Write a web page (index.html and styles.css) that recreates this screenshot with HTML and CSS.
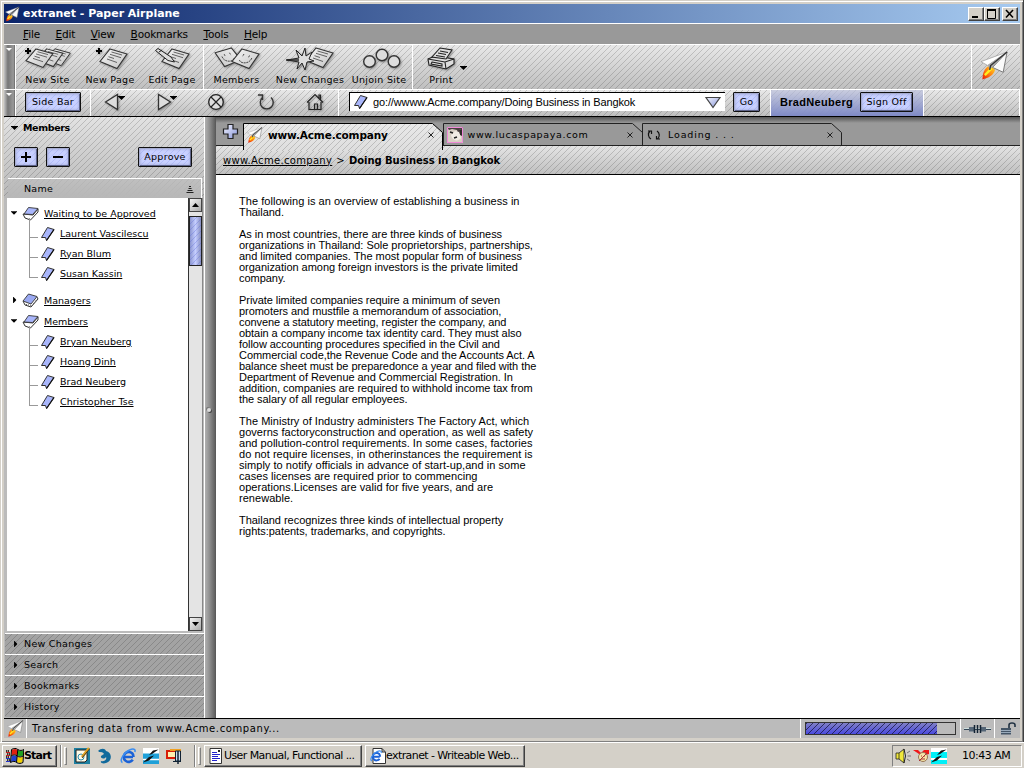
FILE: index.html
```
<!DOCTYPE html>
<html lang="en">
<head>
<meta charset="utf-8">
<title>extranet - Paper Airplane</title>
<link rel="stylesheet" href="styles.css">
</head>
<body>
<svg class="defs" width="0" height="0">
  <defs>
    <linearGradient id="flame" x1="0" y1="1" x2="1" y2="0"><stop offset="0" stop-color="#e81808"/><stop offset=".45" stop-color="#ff7a10"/><stop offset="1" stop-color="#ffe020"/></linearGradient>
    <linearGradient id="paper" x1="0" y1="0" x2="1" y2="1"><stop offset="0" stop-color="#f6f6f6"/><stop offset="1" stop-color="#c4c4c4"/></linearGradient>
    <linearGradient id="lav" x1="0" y1="0" x2="1" y2="1"><stop offset="0" stop-color="#f4f6ff"/><stop offset="1" stop-color="#8794d8"/></linearGradient>
    <symbol id="plane" viewBox="0 0 30 30">
      <path d="M8 16C3 20 3 25 2.500 29.500C9 28 14 25 15.500 20L12 15Z" fill="url(#flame)"/>
      <path d="M5 25L12 18" stroke="#ffee20" stroke-width="2.500"/>
      <path d="M28 1L1 11L8 15Z" fill="#fff" stroke="#999" stroke-width=".7"/>
      <path d="M28 1L13 17L24 22Z" fill="#fafafa" stroke="#777" stroke-width="1"/>
      <path d="M28 1L8 14.500L10 19L13 16.500Z" fill="#aaa"/>
      <path d="M28 1L11 15L10 19.500" fill="none" stroke="#333" stroke-width="1.400"/>
    </symbol>
    <symbol id="mark" viewBox="0 0 16 16">
      <path d="M7.500 1.500L14 3.500L6.500 14.500L5.500 11.500L1.500 11.500Z" fill="#a9b6fb" stroke="#333"/>
      <path d="M14 3.500L6.500 14.500" stroke="#111" stroke-width="1.300"/>
    </symbol>
    <symbol id="book" viewBox="0 0 17 15">
      <path d="M1 8L3 12L8.500 14L16 6V3L11 9Z" fill="#fff" stroke="#333"/>
      <path d="M6.500 1.500L16 2.500L10.500 8.500L2 8Z" fill="#a9b6fb" stroke="#333" stroke-width=".9"/>
    </symbol>
    <symbol id="bookshut" viewBox="0 0 17 15">
      <path d="M1 8L3 12L9 14L16 6L15 4" fill="#fff" stroke="#333"/>
      <path d="M6.500 1L15 3.500L9 11L1 8Z" fill="#9aa9f2" stroke="#333" stroke-width=".9"/>
      <path d="M4 11.500L10 12.500L16 5" fill="none" stroke="#555" stroke-dasharray="1 1"/>
    </symbol>
    <symbol id="sheet" viewBox="0 0 29 22">
      <path d="M11 1L28 6L18 20.500L1 13.500Z" fill="url(#paper)" stroke="#333" stroke-width="1.100"/>
      <path d="M12.500 4L23 7M11 6.300L22 9.700M9.500 8.700L15 10.500M8 11L18 14.500" stroke="#555" stroke-width=".9"/>
    </symbol>
    <symbol id="face" viewBox="0 0 29 22">
      <path d="M11 1L28 6L18 20.500L1 13.500Z" fill="url(#paper)" stroke="#333" stroke-width="1.100"/>
      <path d="M13 6L11.500 8.500M18.500 7.500L17.500 9.500M8.500 12C9 16 19 16.500 21 9.500" fill="none" stroke="#444" stroke-dasharray="2 .7"/>
    </symbol>
    <symbol id="flag" viewBox="0 0 18 16">
      <path d="M6 2C8 .5 10 .5 11.500 2L11 7.500C9.500 6 7.500 6 5.500 7.500Z" fill="#e02010"/><path d="M12 2C14 3.500 16 3 17.500 2L17 7.500C15 9 13.500 8.500 11.500 7.500Z" fill="#20a020"/><path d="M5.500 8.500C7.500 7 9.500 7 11 8.500L10.500 14C8.500 12.500 7 13 5 14Z" fill="#2040d0"/><path d="M11.500 8.500C13.500 10 15 9.500 17 8.500L16.500 14C14.500 15.500 13 15 11 14Z" fill="#f0d000"/>
      <path d="M5.500 1.500C8 0 10 0 11.800 1.500C14 3 16 2.500 18 1.500M5 8C7.500 6.500 9.500 6.500 11.200 8C13.500 9.500 15 9 17.200 8M4.500 14.500C7 13 9 13 10.500 14.500C13 16 15 15.500 17 14.500M5.500 1.500L4.500 14.500M11.800 1.500L10.500 14.500M17.800 1.500L17 14.500" fill="none" stroke="#000"/>
      <path d="M0 3H3M1 6H4M0 9H3.500M1 12H4" stroke="#000" stroke-width="1.500" stroke-dasharray="1.200 .6"/><path d="M0 4.500H4M0 7.500H4" stroke="#c22"/><path d="M0 10.500H4M0 13.500H4" stroke="#23c"/>
    </symbol>
    <symbol id="ie" viewBox="0 0 16 16">
      <path d="M13 9H4.500M12.800 6A5 5 0 1 0 12.800 11.800M13.500 9A5 5 0 0 0 12 5" fill="none" stroke="#1c62d6" stroke-width="2.600"/>
      <path d="M2.500 14.500C-1 13.500 3 5 9.500 2C13 .5 16 .8 14.800 4" fill="none" stroke="#3a8cf0" stroke-width="1.500"/>
    </symbol>
    <symbol id="swoosh" viewBox="0 0 16 16">
      <path d="M0 0H16V16H0Z" fill="#fff"/><path d="M0 5.500H16V16H0Z" fill="#1fa0d8"/>
      <path d="M0 11.500H16" stroke="#fff" stroke-width="1.500"/>
      <path d="M15.500 1.500L10 2.500L6 7L9 6ZM11 7.500L6 9L0 14.500L6 12.500Z" fill="#111"/>
    </symbol>
    <symbol id="down" viewBox="0 0 7 4"><path d="M0 0H7V.6L3.500 4L0 .6Z" fill="#000"/></symbol>
    <symbol id="right" viewBox="0 0 4 7"><path d="M0 0H.6L4 3.500L.6 7H0Z" fill="#000"/></symbol>
    <symbol id="close" viewBox="0 0 6 6"><path d="M.5 .5L5.500 5.500M5.500 .5L.5 5.500" stroke="#111" stroke-width=".9"/></symbol>
    <symbol id="reload" viewBox="0 0 18 18"><path d="M5.500 4.500A6.500 6.500 0 1 0 14 4.500M1 2H5.500V7" fill="none" stroke="#333" stroke-width="1.400"/></symbol>
  </defs>
</svg>

<div class="window">
  <header class="titlebar">
    <svg class="i-title"><use href="#plane"/></svg>
    <h1 class="title">extranet - Paper Airplane</h1>
    <div class="winbtns">
      <span class="winbtn"><svg width="12" height="10"><path d="M2 8H8" stroke="#000" stroke-width="2"/></svg></span>
      <span class="winbtn"><svg width="12" height="10"><path d="M1.500 1.500H9.500V9.500H1.500Z" fill="none" stroke="#000"/><path d="M1 1H10" stroke="#000" stroke-width="2"/></svg></span>
      <span class="winbtn last"><svg width="12" height="10"><path d="M2 1L9 8.500M9 1L2 8.500" stroke="#000" stroke-width="1.600"/></svg></span>
    </div>
  </header>

  <nav class="menu">
    <span><u>F</u>ile</span><span><u>E</u>dit</span><span><u>V</u>iew</span><span><u>B</u>ookmarks</span><span><u>T</u>ools</span><span><u>H</u>elp</span>
  </nav>

  <div class="bar tools">
    <span class="grip"></span>
    <div class="group">
      <div class="tool w60"><svg width="50" height="24"><g transform="scale(1 .95)"><use href="#sheet" x="21" y="1" width="28" height="20"/><use href="#sheet" x="13" y="1" width="28" height="21"/><use href="#sheet" x="2" y="1" width="29" height="22"/></g><path d="M2 4H8M5 1V7" stroke="#000" stroke-width="2"/></svg><span>New Site</span></div>
      <div class="tool w64"><svg width="36" height="24"><use href="#sheet" x="7" y="1" width="29" height="22"/><path d="M4 4H10M7 1V7" stroke="#000" stroke-width="2"/></svg><span>New Page</span></div>
      <div class="tool w62"><svg width="36" height="24"><use href="#sheet" x="7" y="1" width="29" height="22"/><path d="M1.500 3.500L4 1.500L17 10L20.500 15L14 13.500Z" fill="#ddd" stroke="#222"/><path d="M5 5L8 3" stroke="#222"/></svg><span>Edit Page</span></div>
    </div>
    <div class="group">
      <div class="tool w66"><svg width="48" height="24"><g transform="matrix(-1 0 0 1 29 0)"><use href="#face" y="0" width="28" height="21"/></g><use href="#face" x="18" y="1" width="29" height="22"/></svg><span>Members</span></div>
      <div class="tool w80"><svg width="48" height="24"><use href="#sheet" x="19" y="0" width="29" height="22"/><path d="M1 13L13 11L10 3L16 9L19 1L20 9L26 5L23 12L28 14L21 15L19 23L16 16L11 22L13 15Z" fill="#ddd" stroke="#222"/><path d="M0 13H13" stroke="#222" stroke-width="1.500"/></svg><span>New Changes</span></div>
      <div class="tool w58"><svg width="40" height="24"><g fill="#ddd" stroke="#333" stroke-width="1.400"><circle cx="7.500" cy="14.500" r="5.800"/><circle cx="20" cy="8" r="5.800"/><circle cx="32" cy="14.500" r="5.800"/></g></svg><span>Unjoin Site</span></div>
    </div>
    <div class="group grow">
      <div class="tool w56"><svg width="28" height="24"><g stroke="#222" stroke-width="1.100" fill="#ddd"><path d="M1 12L8 9L27 12V17L19 22L2 18Z"/><path d="M5 10L13 1L25 3L19 12Z"/><path d="M1 12L18 15L27 12M18 15L19 22M5 15L15 17V19L4 17ZM13 4L21 5.500M11 6L19 7.500M9 8.500L18 10" fill="none"/></g></svg><span>Print</span></div>
      <svg class="drop print-drop"><use href="#down"/></svg>
    </div>
    <div class="group logo"><svg width="29" height="31"><use href="#plane"/></svg></div>
  </div>

  <div class="bar nav">
    <span class="grip"></span>
    <div class="group g-side"><button class="btn b-side">Side Bar</button></div>
    <div class="group g-nav">
      <span class="pair"><svg width="16" height="18"><path d="M1.500 9L13.500 1.500V16.500Z" fill="#ddd" stroke="#333" stroke-width="1.300"/></svg><svg class="drop"><use href="#down"/></svg></span>
      <span class="pair"><svg width="16" height="18"><path d="M14.500 9L2.500 1.500V16.500Z" fill="#ddd" stroke="#333" stroke-width="1.300"/></svg><svg class="drop"><use href="#down"/></svg></span>
      <svg class="stop" width="18" height="18"><circle cx="9" cy="9" r="7.300" fill="#ddd" stroke="#222" stroke-width="1.300"/><path d="M4 4L14 14M14 4L4 14" stroke="#222" stroke-width="1.200"/></svg>
      <svg class="rel" width="18" height="18"><use href="#reload"/></svg>
      <svg class="home" width="18" height="18"><path d="M3 9V16.500H15V9M1 9.500L9 1.500L17 9.500M13 5V2H14.500V7M8.500 16V11H11.500V16" fill="none" stroke="#222" stroke-width="1.200"/></svg>
    </div>
    <div class="group g-url">
      <div class="url"><svg width="16" height="16"><use href="#mark"/></svg><span>go://wwww.Acme.company/Doing Business in Bangkok</span><svg width="16" height="13"><path d="M1 1.500H15L8 11.500Z" fill="url(#lav)" stroke="#444" stroke-width="1.200"/></svg></div>
      <button class="btn b-go">Go</button>
    </div>
    <div class="group user"><b>BradNeuberg</b><button class="btn b-sign">Sign Off</button></div>
    <div class="group grow"></div>
  </div>

  <div class="body">
    <aside class="side">
      <section class="panel">
        <h2><svg class="drop"><use href="#down"/></svg>Members</h2>
        <div class="actions">
          <button class="btn sq"><svg width="12" height="12"><path d="M1 6H11M6 1V11" stroke="#000" stroke-width="2"/></svg></button>
          <button class="btn sq"><svg width="12" height="12"><path d="M1 6H11" stroke="#000" stroke-width="2"/></svg></button>
          <button class="btn b-app">Approve</button>
        </div>
        <div class="thead"><span>Name</span><svg width="8" height="8"><path d="M3 1.500H5M2.500 3.500H5.500M1.500 5.500H6.500M.5 7.500H7.500" stroke="#111" stroke-width=".9"/></svg></div>
      </section>
      <div class="listwrap">
        <div class="list">
          <div class="row"><svg class="tw"><use href="#down"/></svg><svg class="bk"><use href="#book"/></svg><a>Waiting to be Approved</a></div>
          <div class="kids">
            <div class="kid"><i></i><svg><use href="#mark"/></svg><a>Laurent Vascilescu</a></div>
            <div class="kid"><i></i><svg><use href="#mark"/></svg><a>Ryan Blum</a></div>
            <div class="kid"><i></i><svg><use href="#mark"/></svg><a>Susan Kassin</a></div>
          </div>
          <div class="row mgr"><svg class="tw shut"><use href="#right"/></svg><svg class="bk"><use href="#bookshut"/></svg><a>Managers</a></div>
          <div class="row mem"><svg class="tw"><use href="#down"/></svg><svg class="bk"><use href="#book"/></svg><a>Members</a></div>
          <div class="kids">
            <div class="kid"><i></i><svg><use href="#mark"/></svg><a>Bryan Neuberg</a></div>
            <div class="kid"><i></i><svg><use href="#mark"/></svg><a>Hoang Dinh</a></div>
            <div class="kid"><i></i><svg><use href="#mark"/></svg><a>Brad Neuberg</a></div>
            <div class="kid"><i></i><svg><use href="#mark"/></svg><a>Christopher Tse</a></div>
          </div>
        </div>
        <div class="scroll">
          <span class="sbtn"><svg width="7" height="4"><path d="M3.500 0L7 4H0Z"/></svg></span>
          <span class="thumb"></span>
          <span class="sbtn end"><svg width="7" height="4"><path d="M3.500 4L7 0H0Z"/></svg></span>
        </div>
      </div>
      <div class="acc"><svg><use href="#right"/></svg><span>New Changes</span></div>
      <div class="acc"><svg><use href="#right"/></svg><span>Search</span></div>
      <div class="acc"><svg><use href="#right"/></svg><span>Bookmarks</span></div>
      <div class="acc"><svg><use href="#right"/></svg><span>History</span></div>
    </aside>
    <div class="splitter"><i></i></div>
    <main class="main">
      <div class="tabs">
        <span class="add"><svg width="17" height="17"><path d="M6 1.500H11V6H15.500V11H11V15.500H6V11H1.500V6H6Z" fill="url(#lav)" stroke="#222" stroke-width="1.200"/></svg></span>
        <div class="tab on"><div class="fill"></div><svg class="edge" width="200" height="27"><path d="M.5 27V.5H189.500L199.500 9.500V27" fill="none" stroke="#000"/></svg><svg class="fav" width="16" height="16"><use href="#plane"/></svg><b>www.Acme.company</b><svg class="x"><use href="#close"/></svg></div>
        <div class="tab"><svg class="edge" width="200" height="22"><path d="M.5 22V.5H189.500L199.500 9.500V22" fill="none" stroke="#222"/></svg><svg class="fav" width="16" height="16"><path d="M0 0H16V16H0Z" fill="#d8cfc4"/><path d="M0 0H16V2L12 3L13 7L11 6L10 3L5 2L2 3Z" fill="#4a4040"/><path d="M12 3L15 2V9L13 8Z" fill="#302828"/><path d="M4 8C5 14 11 15 14 11L12 5L8 4Z" fill="#f2ece4"/><path d="M3 5L6 6M7 11L10 10" stroke="#222" stroke-width="1.500"/><path d="M.5 .5H15.500V15.500H.5Z" fill="none" stroke="#f08ad8"/></svg><span class="luc">www.lucaspapaya.com</span><svg class="x"><use href="#close"/></svg></div>
        <div class="tab"><svg class="edge" width="200" height="22"><path d="M.5 22V.5H189.500L199.500 9.500V22" fill="none" stroke="#222"/></svg><svg class="fav" width="16" height="16"><path d="M5 12A5 5 0 0 1 4 4M11 4A5 5 0 0 1 11.500 12M2 4H5.500V7M14 12H10.500V9" fill="none" stroke="#111" stroke-width="1.200"/></svg><span class="load">Loading . . .</span><svg class="x"><use href="#close"/></svg></div>
      </div>
      <div class="crumb"><a>www.Acme.company</a><span>&gt;</span><b>Doing Business in Bangkok</b></div>
      <article class="doc">
        <p><span class="first">The following is an overview of establishing a business in</span><br>Thailand.</p>
        <p>As in most countries, there are three kinds of business<br>organizations in Thailand: Sole proprietorships, partnerships,<br>and limited companies. The most popular form of business<br>organization among foreign investors is the private limited<br>company.</p>
        <p class="tight">Private limited companies require a minimum of seven<br>promoters and mustfile a memorandum of association,<br>convene a statutory meeting, register the company, and<br>obtain a company income tax identity card. They must also<br>follow accounting procedures specified in the Civil and<br>Commercial code,the Revenue Code and the Accounts Act. A<br>balance sheet must be preparedonce a year and filed with the<br>Department of Revenue and Commercial Registration. In<br>addition, companies are required to withhold income tax from<br>the salary of all regular employees.</p>
        <p class="loose">The Ministry of Industry administers The Factory Act, which<br>governs factoryconstruction and operation, as well as safety<br>and pollution-control requirements. In some cases, factories<br>do not require licenses, in otherinstances the requirement is<br>simply to notify officials in advance of start-up,and in some<br>cases licenses are required prior to commencing<br>operations.Licenses are valid for five years, and are<br>renewable.</p>
        <p>Thailand recognizes three kinds of intellectual property<br>rights:patents, trademarks, and copyrights.</p>
      </article>
    </main>
  </div>

  <footer class="status">
    <span class="s-ico"><svg width="17" height="17"><use href="#plane"/></svg></span>
    <span class="s-text">Transfering data from www.Acme.company...</span>
    <span class="s-prog"><span class="prog"><i></i></span></span>
    <span class="s-plug"><svg width="27" height="10"><path d="M0 5H27" stroke="#345" stroke-width="2"/><path d="M0 4.500H27" stroke="#cdd"/><path d="M5 3H10V7.500H5ZM17 3H22V7.500H17Z" fill="#567"/><path d="M10.500 1V9M13.500 1V9M16.500 1V9" stroke="#123" stroke-width="1.500"/></svg></span>
    <span class="s-lock"><svg width="17" height="13"><path d="M1 6H11V12.500H1Z" fill="#456"/><path d="M1 8.500H11M1 10.500H11" stroke="#9ab"/><path d="M9 6V3Q9 1 12 1Q15 1 15 3V5" fill="none" stroke="#234" stroke-width="1.600"/></svg></span>
  </footer>
</div>

<div class="taskbar">
  <div class="start"><svg width="18" height="16"><use href="#flag"/></svg><b>Start</b></div>
  <span class="sep"></span><span class="hand"></span>
  <div class="quick">
    <svg width="16" height="16"><path d="M0 0H16V16H0Z" fill="#1d7fa0"/><path d="M2 2H13V12L11 14H2Z" fill="#fffbe8" stroke="#222"/><circle cx="7" cy="9" r="3" fill="none" stroke="#2a8ab0"/><path d="M15 0L8 9" stroke="#e0a020" stroke-width="2.500"/><path d="M15.500 1L8 10" stroke="#222" stroke-width=".8"/></svg>
    <svg width="16" height="16"><path d="M1 3C4 0 8 0 9 3C15 4 16 13 9 15C6 16 3 15 4 13C8 14 10 11 9 9C7 12 3 10 4 8L7 6C5 3 3 5 1 3Z" fill="#126a9c"/></svg>
    <svg width="16" height="16"><use href="#ie"/></svg>
    <svg width="16" height="16"><use href="#swoosh"/></svg>
    <svg width="16" height="16"><path d="M0 2H12V11H0Z" fill="#d81c08"/><path d="M2 4H10V9H2Z" fill="#fff0b0"/><path d="M4 1H15V3H4Z" fill="#f0a020"/><path d="M9.500 3H14.500V13H9.500ZM7 13.500H15" fill="#cde" stroke="#123"/><path d="M12 3V16" stroke="#123" stroke-width="1.500"/></svg>
  </div>
  <span class="sep"></span><span class="hand"></span>
  <div class="task t1"><svg width="14" height="16"><path d="M1 .5H12.500V15.500H1Z" fill="#fff" stroke="#333"/><path d="M3 4.500H8M3 6.500H11M3 8.500H9M3 10.500H11M3 12.500H8" stroke="#22c"/><path d="M9 2H11V4H9Z" fill="#222"/></svg><span>User Manual, Functional ...</span></div>
  <div class="task t2"><svg width="16" height="16"><path d="M3 .5H12L15.500 4V15.500H3ZM12 .5V4H15" fill="#fff" stroke="#333"/><use href="#ie" y="2" width="12" height="12"/></svg><span>extranet - Writeable Web...</span></div>
  <div class="tray">
    <svg width="17" height="16"><path d="M1 5H4L9 1V15L4 11H1Z" fill="#f0e83a" stroke="#222" stroke-width=".8"/><path d="M4 5V11" stroke="#222" stroke-width=".8"/><path d="M9 1Q12 8 9 15" fill="#ccc" stroke="#222"/><path d="M12 5L15 3M12.500 8H16M12 11L15 13" stroke="#777"/></svg>
    <svg width="17" height="16"><path d="M0 2H5L8 5L11 2H16V6L9 8Z" fill="#f01818"/><circle cx="10" cy="9" r="4.500" fill="#f6e6a8" stroke="#975"/><path d="M8 8H9M11 8H12M8 11H12M6 13L14 5" stroke="#a33"/></svg>
    <svg width="16" height="16"><path d="M0 0H16V16H0Z" fill="#00f0f8"/><path d="M0 0H16V4H0ZM0 10H16V12H0Z" fill="#fff"/><path d="M15.500 1.500L10 2.500L6 7L9 6ZM11 7.500L6 9L0 14.500L6 12.500Z" fill="#111"/></svg>
    <span>10:43 AM</span>
  </div>
</div>
</body>
</html>
```
FILE: styles.css
```
* { box-sizing: border-box; }
:root {
  --stripe: repeating-linear-gradient(135deg, rgba(0,0,0,.16) 0, rgba(0,0,0,.16) .9px, transparent 1.1px, transparent 4.243px);
}
body { margin: 0; width: 1024px; height: 768px; overflow: hidden; background: #d4d0c8; color: #000; font-family: "DejaVu Sans", sans-serif; font-size: 9.500px; line-height: 12px; white-space: nowrap; }
svg { display: block; flex: none; overflow: visible; }
.defs { position: absolute; }
h1, h2, p { margin: 0; font-size: inherit; }
a { text-decoration: underline; }
button { font: inherit; padding: 0; }

.window { height: 742px; display: flex; flex-direction: column; padding: 4px 3px 4px 4px; border-right: 1px solid #404040; box-shadow: inset 1px 1px #d4d0c8, inset 2px 2px #fff, inset -1px -1px #808080; }
.titlebar { height: 19px; display: flex; align-items: center; background: linear-gradient(90deg, #0a246a, #a6caf0); color: #fff; padding: 0 2px 0 1px; }
.i-title { width: 15px; height: 16px; }
.title { font: bold 11px/14px "DejaVu Sans", sans-serif; margin-left: 3px; letter-spacing: -.02px; flex: 1; }
.winbtns { display: flex; }
.winbtn { width: 16px; height: 14px; background: #d4d0c8; border: 1px solid; border-color: #fff #404040 #404040 #fff; box-shadow: inset -1px -1px #808080; padding: 1px; }
.winbtn.last { margin-left: 2px; }
.menu { height: 21px; border-top: 1px solid #fff; background: #999; display: flex; align-items: center; padding-left: 19px; gap: 15.500px; font-size: 10.500px; letter-spacing: -.15px; }

.bar { display: flex; border-top: 1px solid #fff; background: var(--stripe), linear-gradient(#e8e8e8, #bfbfbf); flex: none; }
.tools { height: 45px; }
.nav { height: 27px; }
.grip { width: 12px; background: linear-gradient(90deg, #c4c4c4, #777 35%, #999 85%, #666); border-right: 1px solid #fff; flex: none; }
.grip::before { content: ""; display: block; margin: 3px 0 0 2px; width: 0; border: 3px solid transparent; border-top-color: #fff; border-bottom: 0; }
.group { display: flex; border-right: 1px solid #fff; flex: none; }
.grow { flex: 1; }
.tool { display: flex; flex-direction: column; align-items: center; padding-top: 2px; letter-spacing: .3px; }
.tool span { margin-top: 3px; }
.tool svg, .g-nav svg { filter: drop-shadow(1px 1px 1px rgba(0,0,0,.35)); }
.w60 { width: 63px; } .w64 { width: 62px; } .w62 { width: 62px; } .w66 { width: 65px; } .w80 { width: 82px; } .w58 { width: 61px; } .w56 { width: 56px; }
.w58 span { margin-left: -5px; }
.drop { width: 7px; height: 4px; }
.print-drop { margin: 21px 0 0 -9px; }
.logo { width: 48px; padding: 5px 0 0 8px; border-right: 0; }
.btn { height: 20px; color: #000; border: 1px solid #111; box-shadow: inset 1px 1px #a6acd0, inset -1px -1px #5d6388, inset 0 0 3px 1px rgba(140,148,190,.7); border-radius: 1px; background: repeating-linear-gradient(135deg, rgba(110,125,225,.22) 0, rgba(110,125,225,.22) 1px, transparent 1px, transparent 4.243px), #c8d0ff; display: flex; align-items: center; justify-content: center; flex: none; letter-spacing: .28px; }
.g-side { width: 75px; padding: 2px 0 0 9px; }
.b-side { width: 56px; }
.g-nav { width: 248px; padding: 3px 0 0 13px; }
.pair { display: flex; width: 52px; }
.pair .drop { margin: 3px 0 0 -2px; filter: none; }
.g-nav .stop { margin-left: -1px; } .g-nav .rel { margin-left: 32px; } .g-nav .home { margin-left: 31px; }
.g-url { width: 432px; padding: 2px 0 0 10px; }
.url { width: 376px; height: 19px; background: #fff; border: solid #000; border-width: 1px 0 0 1px; display: flex; align-items: center; padding: 0 4px 0 3px; }
.url span { font: 11px/14px "Liberation Sans", sans-serif; margin-left: 4px; flex: 1; letter-spacing: -.13px; }
.b-go { width: 27px; margin-left: 8px; }
.user { width: 153px; background: linear-gradient(rgba(200,206,235,.6), #7f8ac6), var(--stripe), #ccc; padding: 2px 0 0 9px; }
.user b { font: bold 11px/20px "Liberation Sans", sans-serif; width: 80px; letter-spacing: .3px; }
.b-sign { width: 53px; }

.body { flex: 1; min-height: 0; display: flex; border-top: 1px solid #000; border-bottom: 1px solid #000; }
.side { width: 201px; background: #bbb; display: flex; flex-direction: column; border-right: 1px solid #fff; }
.panel { height: 81px; background: var(--stripe), linear-gradient(#e2e2e2, #b8b8b8); padding-top: 5px; flex: none; }
.panel h2 { height: 12px; display: flex; align-items: center; padding-left: 7px; gap: 5px; letter-spacing: -.35px; }
.actions { display: flex; margin-top: 13px; padding: 0 12px 0 10px; gap: 8px; }
.sq { width: 24px; }
.b-app { width: 54px; margin-left: auto; }
.thead { margin: 11px 2px 0 4px; height: 20px; border-top: 1px solid #fff; border-right: 1px solid #fff; display: flex; align-items: center; justify-content: space-between; padding: 0 7px 0 16px; background: linear-gradient(rgba(190,190,190,.7), #b8b8b8); letter-spacing: .25px; }
.listwrap { height: 433px; display: flex; padding-left: 3px; flex: none; }
.list { width: 182px; background: #fff; border-right: 1px solid #333; padding-top: 5px; }
.row { height: 20px; display: flex; align-items: center; padding-left: 4px; }
.row a, .kid a { padding-top: 1px; }
.row .tw { width: 6px; height: 4px; margin-right: 5px; }
.row .tw.shut { width: 3.500px; height: 6px; margin: 0 6px 0 1.500px; }
.row .bk { width: 17px; height: 15px; margin-right: 5px; }
.mgr { margin-top: 7px; } .mem { margin-top: 1px; }
.kids { margin-left: 22px; }
.kid { height: 20px; display: flex; align-items: center; }
.kid i { width: 9px; height: 20px; border: solid #999; border-width: 0 0 1px 1px; margin-top: -11px; }
.kid svg { width: 16px; height: 16px; margin: 1px 4px 0 2px; }
.scroll { width: 14px; background: #e4e4e4; display: flex; flex-direction: column; border-right: 1px solid #888; }
.sbtn { height: 14px; background: linear-gradient(135deg, #f4f4f4, #aaa); border: 1px solid #444; display: flex; align-items: center; justify-content: center; }
.thumb { margin-top: 4px; height: 50px; border: 1px solid #222; background: repeating-linear-gradient(135deg, rgba(90,105,215,.35) 0, rgba(90,105,215,.35) 1px, transparent 1px, transparent 4.243px), linear-gradient(90deg, #8c96d0, #c5ceff 50%, #8890c0); }
.sbtn.end { margin-top: auto; }
.acc { height: 21px; border-top: 1px solid #fff; background: var(--stripe), #a3a3a3; display: flex; align-items: center; padding-left: 9px; letter-spacing: .28px; flex: none; margin-left: 1px; }
.acc svg { width: 3.500px; height: 6px; margin-right: 6.500px; }
.listwrap + .acc { margin-top: 2px; }
.splitter { width: 11px; background: linear-gradient(90deg, #b0b0b0, #999 30%, #666 85%, #555); display: flex; align-items: center; }
.splitter i { width: 4px; height: 4px; margin: -16px 0 0 2px; border-radius: 3px; background: #ddd; box-shadow: 1px 1px #444, -1px -1px #777; }

.main { flex: 1; background: #fff; display: flex; flex-direction: column; }
.tabs { height: 29px; background: linear-gradient(#555, #999 6px); border-bottom: 1px solid #222; display: flex; align-items: flex-end; flex: none; }
.add { width: 27px; padding: 0 0 5px 6px; }
.tab { width: 199.500px; height: 21px; position: relative; display: flex; align-items: center; padding: 0 9px 0 4px; flex: none; }
.tab > * { position: relative; }
.tab .edge { position: absolute; left: 0; top: -1px; }
.tab .fill { position: absolute; left: 0; top: -1px; width: 200px; height: 28px; clip-path: polygon(0 0, 189px 0, 200px 10px, 200px 100%, 0 100%); background: var(--stripe), linear-gradient(#e9e9e9, #dedede); }
.on { z-index: 1; }
.tab b { font-size: 10.500px; letter-spacing: -.15px; }
.luc { letter-spacing: .65px; }
.load { letter-spacing: .85px; margin-left: 1px; }
.fav { margin-right: 5px; }
.x { width: 6px; height: 6px; margin-left: auto; }
.crumb { height: 29px; border-bottom: 1px solid #000; background: var(--stripe), linear-gradient(#e4e4e4, #c0c0c0); display: flex; align-items: center; padding: 1px 0 0 7px; flex: none; font-size: 10px; letter-spacing: .32px; }
.crumb span { margin: 0 4px; }
.crumb b { letter-spacing: -.05px; }
.doc { padding: 21px 0 0 23px; font: 11px/11px "Liberation Sans", sans-serif; letter-spacing: -.03px; }
.doc p { margin-bottom: 11px; }
.first { letter-spacing: .04px; }
.tight { letter-spacing: -.06px; }
.loose { letter-spacing: .04px; }

.status { height: 19px; background: #bbb; display: flex; flex: none; }
.status > span { border-right: 1px solid #fff; display: flex; align-items: center; }
.s-ico { width: 23px; padding-left: 3px; }
.s-text { flex: 1; padding-left: 5px; font-size: 10px; letter-spacing: .6px; }
.s-prog { width: 160px; padding-left: 4px; }
.prog { width: 151px; height: 13px; border: 1px solid #333; display: block; }
.prog i { display: block; width: 131px; height: 11px; background: repeating-linear-gradient(135deg, rgba(20,20,60,.75) 0, rgba(20,20,60,.75) .8px, transparent 1px, transparent 4.243px), linear-gradient(#8080c4, #4a4ae0); }
.s-plug { width: 34px; padding-left: 3px; }
.status > .s-lock { padding: 0 3px 0 5px; border: 0; }

.taskbar { height: 26px; border-top: 1px solid #fff; display: flex; align-items: center; padding-left: 2px; font-size: 11px; letter-spacing: -.35px; }
.start, .task { height: 22px; border: 1px solid; border-color: #fff #404040 #404040 #fff; box-shadow: inset -1px -1px #808080; display: flex; align-items: center; flex: none; }
.start { width: 55px; padding-left: 3px; }
.start b { letter-spacing: -.8px; }
.sep { width: 2px; height: 22px; border-left: 1px solid #808080; border-right: 1px solid #fff; margin-left: 3px; }
.hand { width: 3px; height: 18px; border: 1px solid; border-color: #fff #808080 #808080 #fff; margin-left: 2px; }
.quick { display: flex; gap: 7px; margin: 0 9px 0 7px; }
.task { padding-left: 4px; letter-spacing: -.58px; }
.t1 { width: 158px; margin-left: 3px; }
.t1 span { margin-left: 1px; }
.t2 { width: 160px; margin-left: 3px; }
.tray { margin-left: auto; margin-right: 2px; width: 130px; height: 22px; border: 1px solid; border-color: #808080 #fff #fff #808080; display: flex; align-items: center; padding-left: 2px; gap: 1px; }
.tray span { margin-left: 14px; letter-spacing: -.5px; }
```
